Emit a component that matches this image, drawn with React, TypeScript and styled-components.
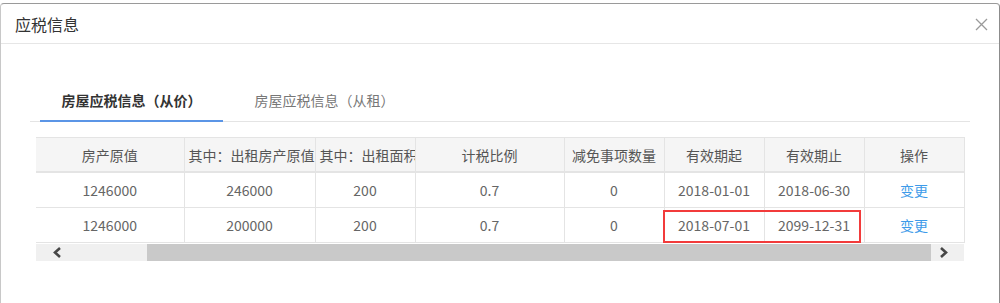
import React from "react";
import styled, { createGlobalStyle } from "styled-components";

const GlobalStyle = createGlobalStyle`
  html, body {
    margin: 0;
    padding: 0;
    background: #ffffff;
  }
  body {
    font-family: "Noto Sans CJK SC", "Noto Sans", sans-serif;
    color: #555;
  }
`;

const Modal = styled.div`
  box-sizing: border-box;
  width: 1000px;
  height: 320px;
  margin-top: 3px;
  background: #fff;
  border: 1px solid #c8c8c8;
  border-top-color: #9a9a9a;
  border-right-color: #8c8c8c;
  border-radius: 4px 4px 0 0;
  display: flex;
  flex-direction: column;
`;

const Header = styled.div`
  height: 39px;
  display: flex;
  align-items: center;
  justify-content: space-between;
  padding: 0 11px 0 14px;
  border-bottom: 1px solid #e6e6e6;
`;

const Title = styled.div`
  font-size: 16px;
  color: #333;
  line-height: 1;
`;

const CloseButton = styled.button`
  width: 14px;
  height: 14px;
  padding: 0;
  border: 0;
  background: transparent;
  display: flex;
  align-items: center;
  justify-content: center;
  cursor: pointer;
  margin-top: 2px;
`;

const Body = styled.div`
  padding: 36px 29px 0 29px;
  display: flex;
  flex-direction: column;
`;

const TabBar = styled.div`
  display: flex;
  gap: 10px;
  padding-left: 10px;
  border-bottom: 1px solid #e4e4e4;
  height: 41px;
`;

const Tab = styled.div<{ $active?: boolean }>`
  box-sizing: border-box;
  width: 183px;
  height: 42px;
  line-height: 40px;
  text-align: center;
  font-size: 14px;
  font-weight: ${(p) => (p.$active ? 700 : 400)};
  color: ${(p) => (p.$active ? "#333" : "#777")};
  border-bottom: 2px solid ${(p) => (p.$active ? "#5b95e6" : "transparent")};
  cursor: pointer;
`;

const TableArea = styled.div`
  position: relative;
  margin: 15px 0 0 6px;
  width: 928px;
`;

const Table = styled.table`
  width: 928px;
  table-layout: fixed;
  border-collapse: collapse;
  font-size: 14px;
`;

const HeadCell = styled.th`
  height: 33px;
  padding: 0 4px;
  background: #f5f5f5;
  border-top: 1px solid #e4e4e4;
  border-bottom: 2px solid #e4e4e4;
  border-right: 1px solid #e4e4e4;
  font-weight: 400;
  color: #555;
  white-space: nowrap;
  overflow: hidden;
  text-align: center;
`;

const Cell = styled.td`
  height: 34px;
  padding: 0 4px;
  border-bottom: 1px solid #e4e4e4;
  border-right: 1px solid #e4e4e4;
  color: #666;
  white-space: nowrap;
  overflow: hidden;
  text-align: center;
`;

const Link = styled.a`
  color: #3d9be9;
  text-decoration: none;
  cursor: pointer;
`;

const Highlight = styled.div`
  position: absolute;
  left: 627px;
  top: 73px;
  width: 198px;
  height: 33px;
  box-sizing: border-box;
  border: 2px solid #f23b3b;
  pointer-events: none;
`;

const ScrollBar = styled.div`
  display: flex;
  align-items: stretch;
  height: 17px;
  margin-top: 1px;
  background: #f0f0f0;
`;

const ArrowButton = styled.div<{ $width: number; $inset: number }>`
  box-sizing: border-box;
  width: ${(p) => p.$width}px;
  padding-left: ${(p) => p.$inset}px;
  display: flex;
  align-items: center;
  flex: none;
`;

const Track = styled.div`
  flex: 1;
  display: flex;
`;

const Thumb = styled.div<{ $offset: number; $size: number }>`
  margin-left: ${(p) => p.$offset}px;
  width: ${(p) => p.$size}px;
  background: #c9c9c9;
`;

const columns = [148, 131, 100, 149, 100, 100, 100, 100];

const headers = [
  "房产原值",
  "其中：出租房产原值",
  "其中：出租面积",
  "计税比例",
  "减免事项数量",
  "有效期起",
  "有效期止",
  "操作",
];

const rows = [
  ["1246000", "246000", "200", "0.7", "0", "2018-01-01", "2018-06-30"],
  ["1246000", "200000", "200", "0.7", "0", "2018-07-01", "2099-12-31"],
];

const Chevron = ({ dir }: { dir: "left" | "right" }) => (
  <svg width="10" height="11" viewBox="0 0 10 11">
    <path
      d={dir === "left" ? "M8 1 L3 5.5 L8 10" : "M2 1 L7 5.5 L2 10"}
      fill="none"
      stroke="#474747"
      strokeWidth="2.6"
    />
  </svg>
);

export default function App() {
  return (
    <>
      <GlobalStyle />
      <Modal>
        <Header>
          <Title>应税信息</Title>
          <CloseButton aria-label="关闭">
            <svg width="13" height="13" viewBox="0 0 13 13">
              <path d="M1 1 L12 12 M12 1 L1 12" stroke="#9a9a9a" strokeWidth="1.3" />
            </svg>
          </CloseButton>
        </Header>
        <Body>
          <TabBar>
            <Tab $active>房屋应税信息（从价）</Tab>
            <Tab>房屋应税信息（从租）</Tab>
          </TabBar>
          <TableArea>
            <Table>
              <colgroup>
                {columns.map((w, i) => (
                  <col key={i} style={{ width: w }} />
                ))}
              </colgroup>
              <thead>
                <tr>
                  {headers.map((h) => (
                    <HeadCell key={h}>{h}</HeadCell>
                  ))}
                </tr>
              </thead>
              <tbody>
                {rows.map((r, ri) => (
                  <tr key={ri}>
                    {r.map((v, ci) => (
                      <Cell key={ci}>{v}</Cell>
                    ))}
                    <Cell>
                      <Link>变更</Link>
                    </Cell>
                  </tr>
                ))}
              </tbody>
            </Table>
            <ScrollBar>
              <ArrowButton $width={44} $inset={16}>
                <Chevron dir="left" />
              </ArrowButton>
              <Track>
                <Thumb $offset={67} $size={784} />
              </Track>
              <ArrowButton $width={33} $inset={8}>
                <Chevron dir="right" />
              </ArrowButton>
            </ScrollBar>
            <Highlight />
          </TableArea>
        </Body>
      </Modal>
    </>
  );
}
